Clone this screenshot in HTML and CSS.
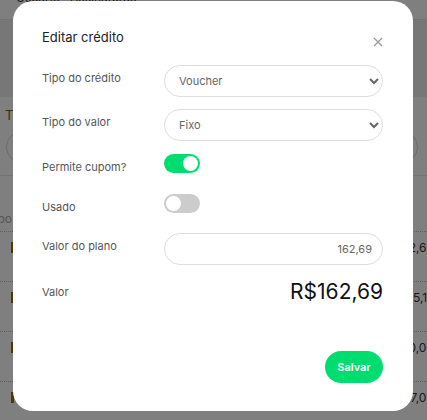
FILE: index.html
```
<!DOCTYPE html>
<html lang="pt-BR">
  <head>
    <meta charset="UTF-8" />
    <title>Editar crédito</title>
    <link rel="stylesheet" href="styles.css">
  </head>
  <body>
    <div class="page">
      <div class="topbar"><span class="topbar-text">Usuário &nbsp; Assinaturas</span></div>
      <div class="toolbar"></div>
      <div class="card">
        <div class="card-title">T</div>
        <div class="search"></div>
        <div class="table">
          <div class="table-head"><span class="clip">Tipo</span></div>
          <div class="table-row"><span class="tag"></span><span class="amount">R$162,69</span></div>
          <div class="table-row"><span class="tag"></span><span class="amount">R$85,17</span></div>
          <div class="table-row"><span class="tag"></span><span class="amount">R$100,00</span></div>
          <div class="table-row"><span class="tag"></span><span class="amount">R$67,00</span></div>
        </div>
      </div>
    </div>

    <div class="overlay">
      <form class="modal">
        <div class="modal-header">
          <h2>Editar crédito</h2>
          <button type="button" class="close" aria-label="Fechar">
            <svg width="10" height="10" viewBox="0 0 10 10">
              <path d="M1 1 L9 9 M9 1 L1 9" stroke="#9a9a9a" stroke-width="1.3" fill="none" />
            </svg>
          </button>
        </div>

        <div class="field field-select">
          <label for="tipoCredito">Tipo do crédito</label>
          <select id="tipoCredito">
            <option>Voucher</option>
          </select>
        </div>
        <div class="field field-select gap-12">
          <label for="tipoValor">Tipo do valor</label>
          <select id="tipoValor">
            <option>Fixo</option>
          </select>
        </div>
        <div class="field field-toggle gap-13">
          <label>Permite cupom?</label>
          <span class="toggle on"><span class="knob"></span></span>
        </div>
        <div class="field field-toggle gap-21">
          <label>Usado</label>
          <span class="toggle"><span class="knob"></span></span>
        </div>
        <div class="field field-select gap-20">
          <label for="valorPlano">Valor do plano</label>
          <input type="text" id="valorPlano" value="162,69" />
        </div>
        <div class="field field-total gap-13">
          <label>Valor</label>
          <div class="total">R$162,69</div>
        </div>

        <div class="modal-footer">
          <button type="submit" class="save">Salvar</button>
        </div>
      </form>
    </div>
  </body>
</html>
```

FILE: styles.css
```
body {
    margin: 0;
    font-family: Inter, "Liberation Sans", sans-serif;
    background-color: #fff;
    width: 427px;
    height: 420px;
    overflow: hidden;
    position: relative;
}

/* page behind the modal */
.page {
    color: #333;
    font-size: 12px;
}
.topbar {
    height: 19px;
    padding-left: 16px;
    background-color: #fff;
    border-bottom: 1px solid #e4e4e4;
    overflow: hidden;
}
.topbar-text {
    display: block;
    margin-top: -9px;
    line-height: 14px;
}
.toolbar {
    height: 77px;
    background-color: #eeeeee;
}
.card {
    background-color: #fff;
    padding-top: 8px;
}
.card-title {
    color: #8a5a00;
    font-size: 13px;
    line-height: 20px;
    padding-left: 5px;
    height: 20px;
}
.search {
    margin: 6px 9px 12px 6px;
    height: 30px;
    border: 1px solid #d8d8d8;
    border-radius: 16px;
}
.table-head {
    border-top: 1px solid #e8e8e8;
    padding: 35px 0 5px;
    line-height: 15px;
    color: #aaa;
    border-bottom: 1px dotted #bbb;
}
.clip {
    display: block;
    width: 12px;
    overflow: hidden;
    white-space: nowrap;
    direction: rtl;
}
.table-row {
    display: flex;
    justify-content: space-between;
    align-items: flex-start;
    height: 40px;
    padding-top: 9px;
    line-height: 13px;
    border-bottom: 1px dotted #bbb;
}
.tag {
    width: 3px;
    height: 11px;
    margin: 1px 0 0 11px;
    background-color: #a66b00;
}
.amount {
    margin-right: -7px;
}

/* modal */
.overlay {
    position: absolute;
    inset: 0;
    background-color: rgba(0, 0, 0, 0.5);
}
.modal {
    position: absolute;
    left: 13px;
    top: 1px;
    width: 400px;
    height: 410px;
    box-sizing: border-box;
    padding: 28px 30px 28px 29px;
    background-color: #fff;
    border-radius: 20px;
    display: flex;
    flex-direction: column;
}
.modal-header {
    display: flex;
    justify-content: space-between;
    align-items: flex-start;
    height: 18px;
    margin-bottom: 18px;
}
.modal-header h2 {
    margin: 0;
    font-size: 13px;
    font-weight: 400;
    line-height: 17px;
    color: #222;
}
.close {
    border: none;
    background: none;
    padding: 0;
    margin-top: 8px;
    width: 10px;
    height: 10px;
    display: flex;
}

.field {
    display: flex;
    align-items: flex-start;
    flex-shrink: 0;
}
.field label {
    width: 122px;
    flex-shrink: 0;
    font-size: 11px;
    line-height: 16px;
    padding-top: 5px;
    color: #555;
}
.field-select {
    height: 32px;
}
.field-toggle {
    height: 19px;
}
.field-select select,
.field-select input {
    width: 219px;
    height: 32px;
    box-sizing: border-box;
    border: 1px solid #dedede;
    border-radius: 16px;
    background-color: #fff;
    font-family: Inter, "Liberation Sans", sans-serif;
    font-size: 11px;
    color: #666;
    padding: 0 10px 0 10px;
    outline: none;
}
.field-select input {
    text-align: right;
}
.gap-12 {
    margin-top: 12px;
}
.gap-13 {
    margin-top: 13px;
}
.gap-20 {
    margin-top: 20px;
}
.gap-21 {
    margin-top: 21px;
}

.toggle {
    width: 36px;
    height: 19px;
    border-radius: 10px;
    background-color: #cccccc;
    display: flex;
    align-items: center;
    padding: 0 2px;
    box-sizing: border-box;
}
.toggle .knob {
    width: 15px;
    height: 15px;
    border-radius: 50%;
    background-color: #fff;
}
.toggle.on {
    background-color: #00dd70;
    justify-content: flex-end;
}

.field-total {
    align-items: center;
    height: 27px;
}
.field-total label {
    padding-top: 0;
}
.total {
    flex-grow: 1;
    text-align: right;
    font-size: 21px;
    line-height: 27px;
    color: #111;
}

.modal-footer {
    margin-top: auto;
    display: flex;
    justify-content: flex-end;
}
.save {
    background-color: #00dd70;
    color: #fff;
    border: none;
    border-radius: 16px;
    height: 32px;
    width: 58px;
    font-family: Inter, "Liberation Sans", sans-serif;
    font-size: 11px;
    font-weight: 600;
    cursor: pointer;
}
```
